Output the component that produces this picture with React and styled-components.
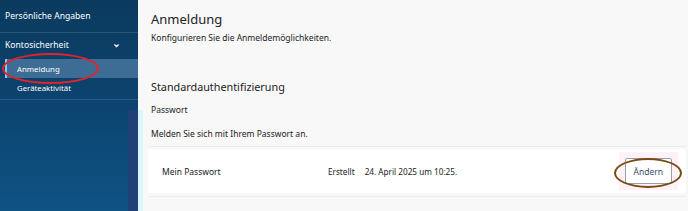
import React from 'react';
import styled, { createGlobalStyle } from 'styled-components';

const GlobalStyle = createGlobalStyle`
  html, body {
    margin: 0;
    padding: 0;
    background: #f8f8f8;
  }
  body {
    font-family: "Noto Sans", "DejaVu Sans", sans-serif;
    color: #222;
  }
`;

const Page = styled.div`
  display: flex;
  width: 688px;
  height: 211px;
  overflow: hidden;
`;

const Sidebar = styled.nav`
  position: relative;
  width: 138px;
  flex-shrink: 0;
  background:
    linear-gradient(to right, transparent 128px, #233f78 128px) 0 110px / 100% 100% no-repeat,
    linear-gradient(to bottom, #0b3a5e 0%, #0c4470 50%, #0e5384 100%);
  color: #fff;
`;

const NavItem = styled.div`
  display: flex;
  align-items: center;
  justify-content: space-between;
  height: ${p => p.$h || 32}px;
  padding: 0 18px 0 5px;
  font-size: 8.6px;
  border-bottom: ${p => (p.$divider ? '1px solid rgba(255,255,255,0.12)' : 'none')};
`;

const Chevron = styled.svg`
  width: 7px;
  height: 7px;
`;

const SubList = styled.div`
  padding: 2px 0 2px;
  border-bottom: 1px solid rgba(255,255,255,0.12);
`;

const SubItem = styled.div`
  display: flex;
  align-items: center;
  height: 19px;
  margin-left: 5px;
  padding-left: ${p => (p.$active ? 10 : 12)}px;
  font-size: 7.8px;
  background: ${p => (p.$active ? '#3d6c94' : 'transparent')};
  border-left: ${p => (p.$active ? '2px solid #8cc6f0' : 'none')};
`;

const Ring = styled.span`
  position: absolute;
  border: 2px solid ${p => p.$color};
  border-radius: 50%;
  pointer-events: none;
`;

const Main = styled.main`
  position: relative;
  flex: 1;
  background:
    linear-gradient(to right, #d8f6fb 5px, transparent 5px) 0 110px / 100% 100% no-repeat,
    #f8f8f8;
  padding: 9px 0 0 13px;
`;

const Title = styled.h1`
  margin: 0;
  font-size: 13px;
  font-weight: 400;
  line-height: 20px;
`;

const Lead = styled.p`
  margin: 3px 0 0;
  font-size: 8.5px;
  line-height: 12px;
`;

const SectionTitle = styled.h2`
  margin: 35px 0 0;
  font-size: 10.8px;
  font-weight: 400;
  line-height: 16px;
`;

const Label = styled.p`
  margin: ${p => p.$mt}px 0 0;
  font-size: 8.5px;
  line-height: 12px;
`;

const Rule = styled.div`
  height: 1px;
  background: #ececec;
  margin: ${p => p.$mt}px 2px 0 -3px;
`;

const Card = styled.div`
  display: flex;
  align-items: center;
  height: 44px;
  margin: 2px 2px 0 -3px;
  padding: 0 8px 0 14px;
  background: #fff;
  border-radius: 3px;
  font-size: 8.5px;
`;

const CardName = styled.span`
  width: 166px;
`;

const CardMeta = styled.span`
  display: flex;
  gap: 10px;
  flex: 1;
  font-size: 8.2px;
`;

const ButtonWrap = styled.div`
  position: relative;
  padding: 6px;
  background: rgba(255, 215, 235, 0.35);
`;

const Button = styled.button`
  height: 26px;
  padding: 0 8px;
  font-family: inherit;
  font-size: 8.5px;
  color: #3a4c6b;
  background: #fff;
  border: 1px solid #9aa0aa;
  border-radius: 2px;
`;

export default function App() {
  return (
    <>
      <GlobalStyle />
      <Page>
        <Sidebar>
          <NavItem $divider>Persönliche Angaben</NavItem>
          <NavItem $h={24}>
            Kontosicherheit
            <Chevron viewBox="0 0 10 10">
              <path d="M2 3.5 L5 6.5 L8 3.5" fill="none" stroke="#fff" strokeWidth="1.8" />
            </Chevron>
          </NavItem>
          <SubList>
            <SubItem $active>Anmeldung</SubItem>
            <SubItem>Geräteaktivität</SubItem>
          </SubList>
          <Ring $color="#e0242c" style={{ left: 2, top: 53, width: 93, height: 27 }} />
        </Sidebar>
        <Main>
          <Title>Anmeldung</Title>
          <Lead>Konfigurieren Sie die Anmeldemöglichkeiten.</Lead>
          <SectionTitle>Standardauthentifizierung</SectionTitle>
          <Label $mt={9}>Passwort</Label>
          <Label $mt={12}>Melden Sie sich mit Ihrem Passwort an.</Label>
          <Rule $mt={6} />
          <Card>
            <CardName>Mein Passwort</CardName>
            <CardMeta>
              <span>Erstellt</span>
              <span>24. April 2025 um 10:25.</span>
            </CardMeta>
            <ButtonWrap>
              <Button>Ändern</Button>
            </ButtonWrap>
          </Card>
          <Rule $mt={3} />
          <Ring $color="#7a4a12" style={{ left: 476, top: 158, width: 64, height: 26 }} />
        </Main>
      </Page>
    </>
  );
}
